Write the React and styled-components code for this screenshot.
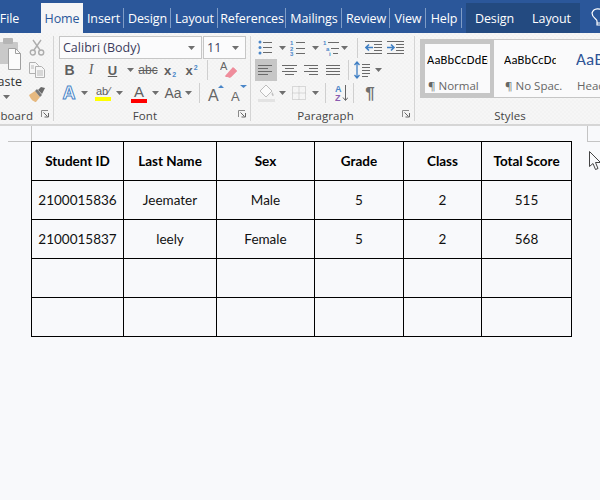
import React from "react";
import styled, { createGlobalStyle } from "styled-components";

const Global = createGlobalStyle`
  html, body { margin: 0; padding: 0; background: #f8f9fb; }
  body { width: 600px; height: 500px; overflow: hidden; font-family: "Open Sans", "Noto Sans", sans-serif; }
`;
const Window = styled.div`position: relative; width: 600px; height: 500px; overflow: hidden; background: #f8f9fb;`;
const TabBar = styled.div`display: flex; height: 33px; background: #2b579a; box-sizing: border-box; padding-top: 3px; overflow: hidden;`;
const Tab = styled.div`
  position: relative; height: 30px; width: ${p => p.$w}px; flex: none; display: flex; align-items: center; justify-content: center;
  color: ${p => (p.$active ? "#2b579a" : "#fff")}; background: ${p => (p.$active ? "#f5f5f6" : "transparent")};
  font-size: 12.5px; letter-spacing: -0.1px; padding-bottom: 0; margin-left: ${p => p.$ml || 0}px;
  ${p => p.$sep && `&::after { content: ""; position: absolute; right: 0; top: 5px; bottom: 5px; width: 1px; background: #7f9cc6; }`}
`;
const Context = styled.div`display: flex; flex: none; height: 30px; width: 114px; background: #234a80; margin-left: 4px;`;
const Bulb = styled.div`flex: none; margin: 4px 0 0 11px;`;

const Ribbon = styled.div`
  display: flex; height: 93px; box-sizing: border-box; overflow: hidden; border-bottom: 2px solid #d6d6d6;
  background: repeating-conic-gradient(#f3f3f3 0 25%, #f6f6f6 0 50%) 0 0 / 4px 4px;
`;
const Group = styled.div`
  position: relative; flex: none; width: ${p => p.$w}px; height: 85px; margin: 3px 0 0 ${p => p.$ml || 0}px; box-sizing: border-box;
  padding-left: ${p => p.$pl || 0}px; border-right: ${p => (p.$open ? "0" : "1px solid #d4d4d4")};
`;
const GroupBody = styled.div`display: flex; height: 69px;`;
const Stack = styled.div`display: flex; flex-direction: column;`;
const GroupLabel = styled.div`
  position: absolute; left: 0; right: 0; top: 72px; height: 16px; line-height: 16px; text-align: center; font-size: 11.5px; color: #444;
  padding-right: ${p => p.$pr || 0}px; white-space: nowrap; letter-spacing: 0.1px;
`;
const Launcher = styled.svg`position: absolute; right: 4px; top: 74px;`;
const PasteCol = styled.div`width: 44px; flex: none; display: flex; flex-direction: column; align-items: center; color: #444; font-size: 12.5px;`;
const PasteText = styled.div`height: 15px; line-height: 15px; margin-top: 2px; color: #333;`;
const Row = styled.div`display: flex; align-items: center; height: ${p => p.$h}px;`;
const Tool = styled.div`
  flex: none; width: ${p => p.$w}px; height: ${p => p.$h || 22}px; margin-left: ${p => p.$ml || 0}px; display: flex; align-items: center; justify-content: center;
  background: ${p => (p.$on ? "#c6c6c6" : "transparent")};
`;
const Divider = styled.div`flex: none; width: 1px; height: ${p => p.$h || 22}px; background: #cfcfcf; margin: 0 ${p => p.$r ?? 5}px 0 ${p => p.$l ?? 5}px;`;
const Combos = styled.div`display: flex; height: 23px; gap: 1px;`;
const Combo = styled.div`
  box-sizing: border-box; width: ${p => p.$w}px; height: 23px; background: #fbfbfc; border: 1px solid #c6c6c6; display: flex; align-items: center;
  justify-content: space-between; padding: 0 6px 0 3px; font-size: 12.5px; color: #3b3b5c;
`;
const Gallery = styled.div`
  display: flex; box-sizing: border-box; width: 220px; height: 59px; margin: 3px 0 0 5px; background: #fafafb;
  border: 1px solid #c6c6c6; border-right: 0;
`;
const StyleCard = styled.div`
  flex: none; box-sizing: border-box; width: ${p => p.$w}px; height: 57px; overflow: hidden; text-align: center; padding: 0 ${p => (p.$on ? 2 : 6)}px;
  border: ${p => (p.$on ? "4px solid #c6c6c6" : "4px solid transparent")}; white-space: nowrap;
`;
const Sample = styled.div`
  height: 32px; line-height: 32px; overflow: hidden; color: ${p => p.$c || "#000"}; font-family: ${p => p.$f || '"Carlito", "Lato", sans-serif'}; font-size: ${p => p.$s || 12.5}px;
  text-align: left; margin-top: 0; letter-spacing: 0.2px;
`;
const Caption = styled.div`height: 16px; line-height: 16px; font-size: 11.5px; color: #666; margin-top: 2px; text-align: left; padding-left: 1px;`;

const Doc = styled.div`padding: 15px 0 0 31px;`;
const Table = styled.table`
  border-collapse: collapse; table-layout: fixed; width: 541px; font-family: "Lato", sans-serif; font-size: 13.5px; color: #111;
  th, td { border: 1px solid #000; height: 38px; padding: 0; text-align: center; box-sizing: content-box; }
  th { font-weight: 700; color: #000; }
  td { font-weight: 400; }
`;
const CropH = styled.div`position: absolute; height: 1px; background: #c4c4c4; top: 141px; left: ${p => p.$l}px; width: ${p => p.$w}px;`;
const CropV = styled.div`position: absolute; width: 1px; background: #c4c4c4; top: 126px; height: 15px; left: ${p => p.$l}px;`;
const Pointer = styled.svg`position: absolute; left: 589px; top: 151px;`;

const S = ({ w = 16, h = 16, children }) => <svg width={w} height={h} viewBox={`0 0 ${w} ${h}`} fill="none">{children}</svg>;
const Arrow = () => <S w={7} h={4}><path d="M0 0h7L3.5 4z" fill="#6f6f6f" /></S>;
const LaunchIcon = () => (
  <Launcher width="8" height="8" viewBox="0 0 8 8" fill="none">
    <path d="M.5 7V.5H7" stroke="#8a8a8a" /><path d="M2.5 2.5L6.5 6.5M3.5 7h4V3" stroke="#666" />
  </Launcher>
);
const lines = (arr, c = "#6a6a6a") => arr.map(([x1, y, x2], i) => <path key={i} d={`M${x1} ${y + 0.5}H${x2}`} stroke={c} />);
const AlignIcon = ({ rows }) => <S w={16} h={13}>{lines(rows)}</S>;

const Scissors = () => <S w={16} h={17}><g stroke="#adadad" strokeWidth="1.4"><path d="M4 1l7 10M12 1L5 11" /><circle cx="3.8" cy="13.5" r="2.5" /><circle cx="12.2" cy="13.5" r="2.5" /></g></S>;
const CopyI = () => <S w={16} h={16}><g stroke="#b0b0b0" fill="#f6f6f6"><path d="M.5.5h6l3 3v8h-9z" /><path d="M6.5 4.5h6l3 3v8h-9z" /></g><path d="M8 9h6M8 11h6M8 13h6M2 4h3M2 6h3" stroke="#b8b8b8" /></S>;
const Brush = () => <S w={17} h={15}><path d="M0 8l6-4 5 6-4 5C5 15 2 13 0 8z" fill="#e6b980" /><path d="M6 4l5 6 2-2-5-6z" fill="#777" /><path d="M9 3l3-3 4 1-3 6z" fill="#6a6a6a" /></S>;
const Paste = () => (
  <S w={34} h={34}>
    <rect x="9" y="5" width="20" height="22" rx="1" fill="#c9c9c9" /><rect x="14" y="1" width="10" height="6" rx="1" fill="#b5b5b5" />
    <path d="M19.5 11.5h7l5 5v16h-12z" fill="#fbfbfb" stroke="#a0a0a0" /><path d="M26.5 11.5v5h5" stroke="#a0a0a0" />
  </S>
);
const TextIcon = styled.span`font-family: ${p => p.$f || '"Liberation Sans", sans-serif'}; font-weight: ${p => p.$b ? 700 : 400}; font-style: ${p => p.$i ? "italic" : "normal"};
  font-size: ${p => p.$s || 14}px; color: ${p => p.$c || "#5f5f5f"}; line-height: 1; position: relative; text-decoration: ${p => p.$d || "none"}; white-space: nowrap;`;
const Sub = styled.span`font-size: 7px; color: #4a86c8; font-weight: 700; position: relative; top: ${p => p.$t}px; margin-left: 1px; font-family: "Liberation Sans", sans-serif;`;
const Bar = styled.div`width: 16px; height: 4px; background: ${p => p.$c}; margin-top: 0;`;
const ColorStack = styled.div`display: flex; flex-direction: column; align-items: center; line-height: 1;`;
const Eraser = () => (
  <S w={18} h={20}>
    <path d="M5 18l9-9 3 3-6 6z" fill="#ec8a99" transform="translate(0 -1)" /><path d="M5 16l8-9 4 4-7 7z" fill="#ef8d9c" />
    <text x="0" y="10" fontSize="11" fontFamily="Liberation Sans" fill="#666">A</text>
  </S>
);
const Grow = ({ up }) => (
  <S w={18} h={18}>
    <text x="1" y="17" fontSize={up ? 16 : 13} fontFamily="Liberation Sans" fill="#666">A</text>
    <path d={up ? "M11 4l3-3 3 3z" : "M10 1h7l-3.5 3z"} fill="#4a86c8" />
  </S>
);
const dots = (ys, x = 1, c = "#4a86c8") => ys.map(y => <circle key={y} cx={x} cy={y} r="1.5" fill={c} />);
const Bullets = () => <S w={15} h={15}>{dots([2, 7.5, 13], 2)}{lines([[5, 2, 14], [5, 7, 14], [5, 12, 14]])}</S>;
const Numbers = () => (
  <S w={16} h={16}><g fill="#4a86c8" fontSize="6" fontFamily="Liberation Sans" fontWeight="700"><text x="0" y="5">1</text><text x="0" y="10.5">2</text><text x="0" y="16">3</text></g>{lines([[6, 2, 15], [6, 8, 15], [6, 13, 15]])}</S>
);
const Multi = () => (
  <S w={16} h={16}><g fill="#4a86c8" fontSize="6" fontFamily="Liberation Sans" fontWeight="700"><text x="0" y="5">1</text><text x="3" y="10.5">a</text><text x="6" y="16">i</text></g>{lines([[5, 2, 16], [8, 8, 16], [10, 13, 15]])}</S>
);
const Indent = ({ out }) => (
  <S w={17} h={13}>
    {lines([[0, 0, 17], [9, 3, 17], [9, 6, 17], [9, 9, 17], [0, 12, 17]])}
    <path d={out ? "M1 6.5h7M4 3.5l-3 3 3 3" : "M0 6.5h7M4 3.5l3 3-3 3"} stroke="#3f7fc4" strokeWidth="1.6" />
  </S>
);
const LineSp = () => (
  <S w={16} h={18}><path d="M3 1v16M.5 4L3 1l2.5 3M.5 14L3 17l2.5-3" stroke="#3f7fc4" strokeWidth="1.3" />{lines([[8, 3, 16], [8, 6, 16], [8, 9, 16], [8, 12, 16], [8, 15, 14]])}</S>
);
const Shading = () => (
  <S w={17} h={18}><path d="M8 1l6 6-6 6-6-6z" fill="#fbfbfb" stroke="#bdbdbd" /><path d="M14 8c2 2 2 4 1 4s-2-2-1-4z" fill="#c0c0c0" /><rect x="0" y="15" width="17" height="3" fill="#e3e3e3" /></S>
);
const Borders = () => (
  <S w={14} h={14}><path d="M.5.5h13v13H.5zM7 .5v13M.5 7h13" stroke="#bbb" strokeDasharray="1 1" /></S>
);
const Sort = () => (
  <S w={13} h={18}>
    <text x="0" y="8" fontSize="9" fontWeight="700" fontFamily="Liberation Sans" fill="#4a86c8">A</text>
    <text x="0" y="17" fontSize="9" fontWeight="700" fontFamily="Liberation Sans" fill="#8a5cb0">Z</text>
    <path d="M10.5 1v15M8 13.5l2.5 3 2.5-3" stroke="#666" />
  </S>
);
const Bulbish = () => <svg width="12" height="20" viewBox="0 0 12 20" fill="none"><path d="M10 18H6v-4c0-2-5-3-5-8a6 6 0 0 1 11-1" stroke="#fff" strokeWidth="1.2" /><path d="M6 16h6" stroke="#fff" /></svg>;

const heads = ["Student ID", "Last Name", "Sex", "Grade", "Class", "Total Score"];
const widths = [92, 93, 98, 89, 78, 90];
const data = [
  ["2100015836", "Jeemater", "Male", "5", "2", "515"],
  ["2100015837", "leely", "Female", "5", "2", "568"],
  ["", "", "", "", "", ""],
  ["", "", "", "", "", ""],
];
const L = [[0, 1, 14], [0, 4, 10], [0, 7, 14], [0, 10, 10]];
const C = [[0, 1, 15], [3, 4, 12], [0, 7, 15], [3, 10, 12]];
const R = [[0, 1, 14], [5, 4, 14], [0, 7, 14], [5, 10, 14]];
const J = [[0, 1, 14], [0, 4, 14], [0, 7, 14], [0, 10, 14]];

export default function App() {
  return (
    <Window>
      <Global />
      <TabBar>
        <Tab $w={41} $ml={-11}>File</Tab>
        <Tab $w={42} $ml={11} $active>Home</Tab>
        <Tab $w={41} $sep>Insert</Tab>
        <Tab $w={47} $sep>Design</Tab>
        <Tab $w={47} $sep>Layout</Tab>
        <Tab $w={68} $sep>References</Tab>
        <Tab $w={56} $sep>Mailings</Tab>
        <Tab $w={48} $sep>Review</Tab>
        <Tab $w={36} $sep>View</Tab>
        <Tab $w={36} $sep>Help</Tab>
        <Context>
          <Tab $w={57}>Design</Tab>
          <Tab $w={57}>Layout</Tab>
        </Context>
        <Bulb><Bulbish /></Bulb>
      </TabBar>
      <Ribbon>
        <Group $w={94} $ml={-40} $pl={24}>
          <GroupBody>
            <PasteCol>
              <Tool $w={34} $h={36}><Paste /></Tool>
              <PasteText>Paste</PasteText>
              <Tool $w={12} $h={16}><Arrow /></Tool>
            </PasteCol>
            <Stack>
              <Tool $w={18} $h={22}><Scissors /></Tool>
              <Tool $w={18} $h={24}><CopyI /></Tool>
              <Tool $w={18} $h={24}><Brush /></Tool>
            </Stack>
          </GroupBody>
          <GroupLabel>Clipboard</GroupLabel>
          <LaunchIcon />
        </Group>
        <Group $w={197} $pl={5}>
          <Combos>
            <Combo $w={143}>Calibri (Body)<Arrow /></Combo>
            <Combo $w={43}>11<Arrow /></Combo>
          </Combos>
          <Row $h={22}>
            <Tool $w={21}><TextIcon $b $s={14}>B</TextIcon></Tool>
            <Tool $w={22}><TextIcon $i $s={14} $f='"Liberation Serif", serif'>I</TextIcon></Tool>
            <Tool $w={21}><TextIcon $b $s={13} $d="underline">U</TextIcon></Tool>
            <Tool $w={14}><Arrow /></Tool>
            <Tool $w={22}><TextIcon $s={12} $d="line-through">abc</TextIcon></Tool>
            <Tool $w={22}><TextIcon $b $s={13}>x<Sub $t={2}>2</Sub></TextIcon></Tool>
            <Tool $w={21}><TextIcon $b $s={13}>x<Sub $t={-5}>2</Sub></TextIcon></Tool>
            <Divider $h={20} />
            <Tool $w={32}><Eraser /></Tool>
          </Row>
          <Row $h={24}>
            <Tool $w={20}><TextIcon $b $s={18} $c="#fff" style={{ WebkitTextStroke: "1px #4a86c8" }}>A</TextIcon></Tool>
            <Tool $w={10}><Arrow /></Tool>
            <Tool $w={20} $ml={4} $h={24}><ColorStack><TextIcon $s={11}>ab⁄</TextIcon><Bar $c="#ffff00" /></ColorStack></Tool>
            <Tool $w={12}><Arrow /></Tool>
            <Tool $w={20} $ml={4} $h={24}><ColorStack><TextIcon $s={15}>A</TextIcon><Bar $c="#ff0000" /></ColorStack></Tool>
            <Tool $w={12}><Arrow /></Tool>
            <Tool $w={22} $ml={1}><TextIcon $s={14}>Aa</TextIcon></Tool>
            <Tool $w={8}><Arrow /></Tool>
            <Divider $h={20} $l={7} $r={6} />
            <Tool $w={20}><Grow up /></Tool>
            <Tool $w={20} $ml={3}><Grow /></Tool>
          </Row>
          <GroupLabel $pr={14}>Font</GroupLabel>
          <LaunchIcon />
        </Group>
        <Group $w={164} $pl={4}>
          <Row $h={23}>
            <Tool $w={20}><Bullets /></Tool>
            <Tool $w={12} $ml={1}><Arrow /></Tool>
            <Tool $w={20}><Numbers /></Tool>
            <Tool $w={12} $ml={1}><Arrow /></Tool>
            <Tool $w={20}><Multi /></Tool>
            <Tool $w={7}><Arrow /></Tool>
            <Divider $h={20} $l={9} $r={4} />
            <Tool $w={22} $ml={0}><Indent out /></Tool>
            <Tool $w={22}><Indent /></Tool>
          </Row>
          <Row $h={22}>
            <Tool $w={22} $on><AlignIcon rows={L} /></Tool>
            <Tool $w={23} $ml={1}><AlignIcon rows={C} /></Tool>
            <Tool $w={22}><AlignIcon rows={R} /></Tool>
            <Tool $w={22}><AlignIcon rows={J} /></Tool>
            <Divider $h={20} $l={3} $r={4} />
            <Tool $w={18}><LineSp /></Tool>
            <Tool $w={14}><Arrow /></Tool>
          </Row>
          <Row $h={24}>
            <Tool $w={22}><Shading /></Tool>
            <Tool $w={11}><Arrow /></Tool>
            <Tool $w={22}><Borders /></Tool>
            <Tool $w={11}><Arrow /></Tool>
            <Divider $h={20} $l={4} $r={4} />
            <Tool $w={22}><Sort /></Tool>
            <Divider $h={20} $l={1} $r={4} />
            <Tool $w={24}><TextIcon $b $s={17} $c="#6f6f6f">¶</TextIcon></Tool>
          </Row>
          <GroupLabel $pr={14}>Paragraph</GroupLabel>
          <LaunchIcon />
        </Group>
        <Group $w={190} $open>
          <Gallery>
            <StyleCard $w={73} $on>
              <Sample>AaBbCcDdEe</Sample>
              <Caption>¶ Normal</Caption>
            </StyleCard>
            <StyleCard $w={72}>
              <Sample>AaBbCcDdEe</Sample>
              <Caption>¶ No Spac...</Caption>
            </StyleCard>
            <StyleCard $w={72}>
              <Sample $c="#2f5496" $s={17}>AaBbCc</Sample>
              <Caption>Heading 1</Caption>
            </StyleCard>
          </Gallery>
          <GroupLabel>Styles</GroupLabel>
        </Group>
      </Ribbon>
      <Doc>
        <Table>
          <colgroup>{widths.map((w, i) => <col key={i} style={{ width: w }} />)}</colgroup>
          <thead><tr>{heads.map(h => <th key={h}>{h}</th>)}</tr></thead>
          <tbody>
            {data.map((r, i) => <tr key={i}>{r.map((c, j) => <td key={j}>{c}</td>)}</tr>)}
          </tbody>
        </Table>
      </Doc>
      <CropH $l={8} $w={23} />
      <CropV $l={31} />
      <CropH $l={587} $w={13} />
      <CropV $l={587} />
      <Pointer width="12" height="20" viewBox="0 0 12 20" fill="none">
        <path d="M.5.5v15l3.5-3 2.5 6 2.5-1-2.5-6h5z" fill="#f8f9fb" stroke="#444" />
      </Pointer>
    </Window>
  );
}
